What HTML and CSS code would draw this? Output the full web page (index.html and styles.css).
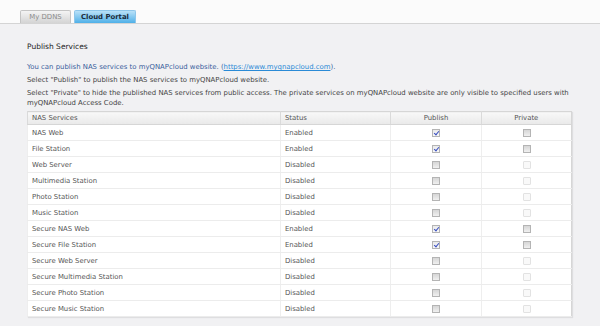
FILE: index.html
```html
<!DOCTYPE html>
<html lang="en">
<head>
    <meta charset="UTF-8">
    <title>myQNAPcloud</title>
    <link rel="stylesheet" href="styles.css">
</head>
<body>
    <!-- Abas -->
    <div class="tabs">
        <div class="tab">My DDNS</div>
        <div class="tab active">Cloud Portal</div>
    </div>

    <div class="content">
        <h3>Publish Services</h3>
        <p class="info">You can publish NAS services to myQNAPcloud website. (<a href="#">https://www.myqnapcloud.com</a>).</p>
        <p>Select "Publish" to publish the NAS services to myQNAPcloud website.</p>
        <p>Select "Private" to hide the published NAS services from public access. The private services on myQNAPcloud website are only visible to specified users with myQNAPcloud Access Code.</p>

        <table class="services">
            <thead>
                <tr>
                    <th class="col-name">NAS Services</th>
                    <th class="col-status">Status</th>
                    <th class="col-check">Publish</th>
                    <th class="col-check">Private</th>
                </tr>
            </thead>
            <tbody>
                <tr><td>NAS Web</td><td>Enabled</td><td class="c"><span class="cb on"></span></td><td class="c"><span class="cb"></span></td></tr>
                <tr><td>File Station</td><td>Enabled</td><td class="c"><span class="cb on"></span></td><td class="c"><span class="cb"></span></td></tr>
                <tr><td>Web Server</td><td>Disabled</td><td class="c"><span class="cb"></span></td><td class="c"><span class="cb off"></span></td></tr>
                <tr><td>Multimedia Station</td><td>Disabled</td><td class="c"><span class="cb"></span></td><td class="c"><span class="cb off"></span></td></tr>
                <tr><td>Photo Station</td><td>Disabled</td><td class="c"><span class="cb"></span></td><td class="c"><span class="cb off"></span></td></tr>
                <tr><td>Music Station</td><td>Disabled</td><td class="c"><span class="cb"></span></td><td class="c"><span class="cb off"></span></td></tr>
                <tr><td>Secure NAS Web</td><td>Enabled</td><td class="c"><span class="cb on"></span></td><td class="c"><span class="cb"></span></td></tr>
                <tr><td>Secure File Station</td><td>Enabled</td><td class="c"><span class="cb on"></span></td><td class="c"><span class="cb"></span></td></tr>
                <tr><td>Secure Web Server</td><td>Disabled</td><td class="c"><span class="cb"></span></td><td class="c"><span class="cb off"></span></td></tr>
                <tr><td>Secure Multimedia Station</td><td>Disabled</td><td class="c"><span class="cb"></span></td><td class="c"><span class="cb off"></span></td></tr>
                <tr><td>Secure Photo Station</td><td>Disabled</td><td class="c"><span class="cb"></span></td><td class="c"><span class="cb off"></span></td></tr>
                <tr><td>Secure Music Station</td><td>Disabled</td><td class="c"><span class="cb"></span></td><td class="c"><span class="cb off"></span></td></tr>
            </tbody>
        </table>
    </div>
</body>
</html>
```

FILE: styles.css
```css
body, html {
    margin: 0;
    height: 100%;
    font-family: "DejaVu Sans", Verdana, sans-serif;
    font-size: 6.9px;
    color: #444;
    background-color: #f1f1f3;
}

/* Abas do topo */
.tabs {
    display: flex;
    align-items: flex-end;
    gap: 3px;
    height: 23px;
    padding-left: 20px;
    background-color: #fbfbfb;
    border-bottom: 1px solid #d4d4d4;
}

.tab {
    width: 49px;
    height: 12px;
    line-height: 12px;
    text-align: center;
    color: #8a8a8a;
    border: 1px solid #c4c4c4;
    border-bottom: none;
    border-radius: 2px 2px 0 0;
    background: linear-gradient(#f4f4f4, #d4d4d4);
}

.tab.active {
    width: 60px;
    color: #1a2a3a;
    font-weight: bold;
    border-color: #8ec6ea;
    background: linear-gradient(#b9e1f8, #4fb0e8);
}

.content {
    padding: 18px 28px 0 27px;
}

h3 {
    margin: 0 0 11px 0;
    font-size: 7.5px;
    font-weight: normal;
    color: #222;
}

p {
    margin: 0 0 3px 0;
    line-height: 10px;
}

.info {
    color: #3a5e9c;
}

.info a {
    color: #2a8ad6;
}

/* Tabela de serviços */
.services {
    width: 545px;
    margin-top: 2px;
    border-collapse: collapse;
    background-color: #fff;
    border: 1px solid #d6d6d6;
    box-shadow: 1px 1px 1px rgba(0, 0, 0, 0.08);
    color: #555;
}

.services th {
    height: 12px;
    padding: 0 4px;
    font-weight: normal;
    text-align: left;
    color: #555;
    background: linear-gradient(#f8f8f8, #e9e9e9);
    border-left: 1px solid #dadada;
    border-bottom: 1px solid #d6d6d6;
}

.services th.col-check {
    text-align: center;
}

.col-name { width: 243px; }
.col-status { width: 101px; }
.col-check { width: 81px; }

.services td {
    height: 15px;
    padding: 0 3px 0 4px;
    border-left: 1px solid #eeeeee;
    border-bottom: 1px solid #ececec;
}

.services td.c {
    text-align: center;
}

/* Checkboxes */
.cb {
    display: inline-block;
    position: relative;
    width: 6px;
    height: 6px;
    vertical-align: middle;
    border: 1px solid #b4b4b4;
    background: linear-gradient(#d6d6d6, #f0f0f0);
}

.cb.on {
    background: linear-gradient(#eaeaea, #f8f8f8);
}

.cb.on::after {
    content: "";
    position: absolute;
    left: 2px;
    top: 0;
    width: 2px;
    height: 4px;
    border-right: 1px solid #3a4fc0;
    border-bottom: 1px solid #3a4fc0;
    transform: rotate(40deg);
}

.cb.off {
    border-color: #e2e2e2;
    border-radius: 1px;
    background: #f9f9f9;
}
```
